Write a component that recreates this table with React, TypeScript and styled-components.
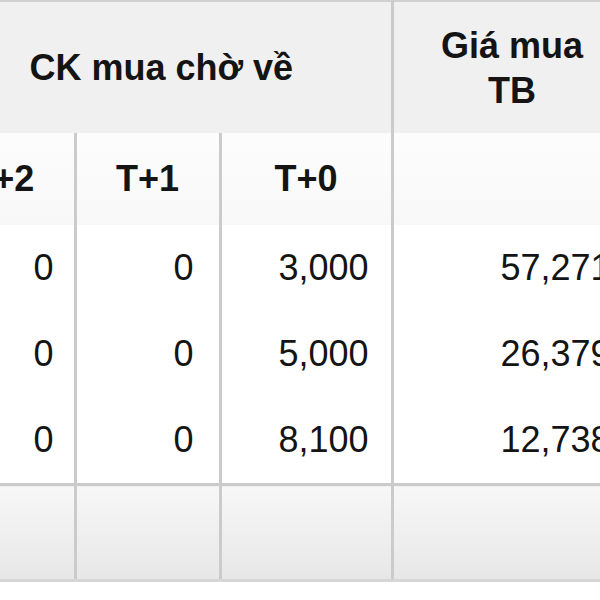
import React from 'react';
import styled, { createGlobalStyle } from 'styled-components';

const GlobalStyle = createGlobalStyle`
    html, body {
        margin: 0;
        padding: 0;
        background: #ffffff;
    }
`;

const Viewport = styled.div`
    width: 600px;
    height: 600px;
    overflow: hidden;
    background: #ffffff;
`;

// the screenshot is a crop of a wider grid, so the T+2 column runs off the left edge
const Grid = styled.table<{ $width: number }>`
    width: ${p => p.$width}px;
    margin-left: -68px;
    border-collapse: collapse;
    table-layout: fixed;
    font-family: 'Liberation Sans', Arial, sans-serif;
    font-size: 36px;
    color: #141414;
    border-top: 2px solid #d0d0d0;
`;

const HeadCell = styled.th`
    height: 131px;
    padding: 0;
    background: #f0f0f0;
    font-weight: 700;
    text-align: center;
    vertical-align: middle;
    line-height: 45px;
    border-right: 3px solid #cbcbcb;
`;

const SubHeadCell = styled.th`
    height: 92px;
    padding: 0;
    background: linear-gradient(#fcfcfc, #f8f8f8);
    font-weight: 700;
    text-align: center;
    vertical-align: middle;
    border-right: 3px solid #cbcbcb;
`;

const NumCell = styled.td<{ $pad: number }>`
    height: 86px;
    padding: 0 ${p => p.$pad}px 0 0;
    text-align: right;
    vertical-align: middle;
    border-right: 3px solid #cbcbcb;
    white-space: nowrap;
`;

const FootCell = styled.td`
    height: 93px;
    padding: 0;
    background: linear-gradient(#f7f7f7, #e7e7e7);
    border-top: 3px solid #cbcbcb;
    border-right: 3px solid #cbcbcb;
    border-bottom: 3px solid #d6d6d6;
`;

const columns = [
    { label: 'T+2', width: 143, pad: 20 },
    { label: 'T+1', width: 145, pad: 25 },
    { label: 'T+0', width: 172, pad: 22 },
    { label: '', width: 240, pad: 20 },
];

const rows = [
    ['0', '0', '3,000', '57,271'],
    ['0', '0', '5,000', '26,379'],
    ['0', '0', '8,100', '12,738'],
];

const total = columns.reduce((s, c) => s + c.width, 0);

export default function App() {
    return (
        <>
            <GlobalStyle />
            <Viewport>
                <Grid $width={total}>
                    <colgroup>
                        {columns.map((c, i) => (
                            <col key={i} style={{ width: c.width }} />
                        ))}
                    </colgroup>
                    <thead>
                        <tr>
                            <HeadCell colSpan={3}>CK mua chờ về</HeadCell>
                            <HeadCell>
                                Giá mua
                                <br />
                                TB
                            </HeadCell>
                        </tr>
                        <tr>
                            {columns.map((c, i) => (
                                <SubHeadCell key={i}>{c.label}</SubHeadCell>
                            ))}
                        </tr>
                    </thead>
                    <tbody>
                        {rows.map((r, ri) => (
                            <tr key={ri}>
                                {r.map((v, ci) => (
                                    <NumCell key={ci} $pad={columns[ci].pad}>
                                        {v}
                                    </NumCell>
                                ))}
                            </tr>
                        ))}
                        <tr>
                            {columns.map((c, i) => (
                                <FootCell key={i} />
                            ))}
                        </tr>
                    </tbody>
                </Grid>
            </Viewport>
        </>
    );
}
